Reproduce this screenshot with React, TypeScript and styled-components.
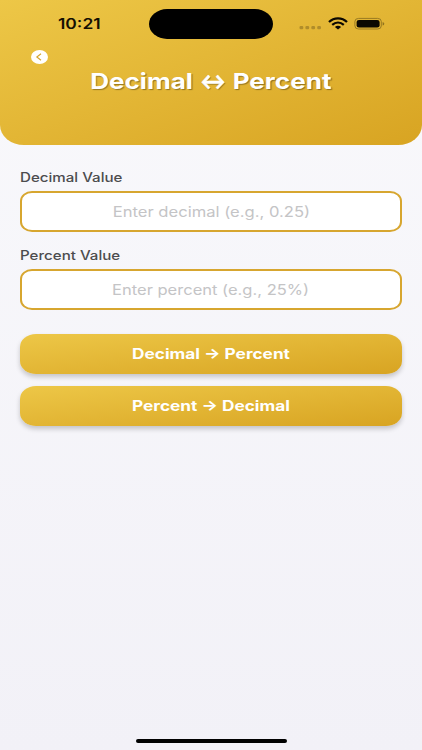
import React from 'react';
import styled, { createGlobalStyle } from 'styled-components';

const GlobalStyle = createGlobalStyle`
  * { box-sizing: border-box; }
  html, body { margin: 0; padding: 0; }
  body { font-family: Inter, "Liberation Sans", sans-serif; }
`;

const gold = 'linear-gradient(to bottom right, #edc747, #d8a422)';

const Screen = styled.main`
  display: flex;
  flex-direction: column;
  width: 422px;
  height: 750px;
  overflow: hidden;
  background: linear-gradient(#f9f9fc, #f2f1f7);
`;

const Header = styled.header`
  flex: none;
  height: 145px;
  background: ${gold};
  border-radius: 0 0 24px 24px / 0 0 20px 20px;
`;

const StatusBar = styled.div`
  display: grid;
  grid-template-columns: 149px 124px 1fr;
  align-items: center;
  height: 48px;
`;

/* Horizontally widened lettering */
const Wide = styled.span<{ $x: number; $origin?: string }>`
  display: inline-block;
  white-space: pre;
  transform: scaleX(${p => p.$x});
  transform-origin: ${p => p.$origin ?? 'center'};
`;

const Time = styled.div`
  padding-left: 57.5px;
  font-size: 14px;
  line-height: 18px;
  font-weight: 600;
  color: #151003;
`;

const Island = styled.div`
  height: 30px;
  border-radius: 18px / 15px;
  background: #000;
`;

const StatusIcons = styled.div`
  display: flex;
  align-items: center;
  padding-left: 26px;
`;

const BackButton = styled.button`
  display: flex;
  align-items: center;
  justify-content: center;
  width: 17px;
  height: 14px;
  margin: 1.5px 0 0 31px;
  padding: 0;
  border: 0;
  border-radius: 50%;
  background: #fff;

  svg { flex: none; }
`;

const Title = styled.h1`
  margin: 3.5px 0 0;
  text-align: center;
  font-size: 22px;
  line-height: 28px;
  font-weight: 700;
  color: #fff;
  text-shadow: 1px 1px 1px rgba(0, 0, 0, 0.35);
`;

const TitleArrow = styled.span`
  display: inline-block;
  margin: 0 -3.2px;
  transform: scaleX(0.75);
  -webkit-text-stroke: 0.5px #fff;
`;

const Form = styled.section`
  flex: 1;
  display: flex;
  flex-direction: column;
  padding: 24px 20px 0;
`;

const Field = styled.label`
  display: flex;
  flex-direction: column;
  height: 78px;
`;

const LabelText = styled.span`
  height: 22px;
  padding-top: 1px;
  line-height: 16px;
  font-size: 12.6px;
  font-weight: 500;
  color: #4c4c4e;
`;

const InputBox = styled.span`
  display: flex;
  align-items: center;
  justify-content: center;
  height: 40.5px;
  border: 2px solid #d7a62f;
  border-radius: 12px / 10px;
  background: #fff;
  font-size: 14.2px;
  color: #c4c4c6;
`;

const Actions = styled.div`
  display: flex;
  flex-direction: column;
  gap: 12px;
  padding-top: 9px;
`;

const Action = styled.button`
  display: flex;
  align-items: center;
  justify-content: center;
  height: 40px;
  padding: 0 0 2px;
  border: 0;
  border-radius: 16px / 13px;
  background: ${gold};
  box-shadow: 0 3px 5px rgba(0, 0, 0, 0.2);
  color: #fff;
  font-family: inherit;
  font-size: 14.2px;
  font-weight: 700;
`;

const HomeIndicator = styled.div`
  flex: none;
  align-self: center;
  width: 151px;
  height: 4px;
  margin-bottom: 7px;
  border-radius: 2px;
  background: #000;
`;

export default function App() {
  return (
    <Screen>
      <GlobalStyle />
      <Header>
        <StatusBar>
          <Time><Wide $x={1.245} $origin="left">10:21</Wide></Time>
          <Island />
          <StatusIcons>
            <svg width="88" height="18" viewBox="0 0 88 18">
              <g fill="#b08d2a">
                <rect x="0.5" y="11" width="3.8" height="3.2" rx="1.2" />
                <rect x="6.4" y="11" width="3.8" height="3.2" rx="1.2" />
                <rect x="12.3" y="11" width="3.8" height="3.2" rx="1.2" />
                <rect x="18.2" y="11" width="3.8" height="3.2" rx="1.2" />
              </g>
              <g fill="none" stroke="#0b0802" strokeWidth="2.2">
                <path d="M30 7C35 2.1 43 2.1 48 7" />
                <path d="M33.2 9.9C36.7 6.7 41.3 6.7 44.8 9.9" />
              </g>
              <path d="M35.9 12C37.8 10.4 40.2 10.4 42.1 12L39 14.4Z" fill="#0b0802" />
              <rect x="55.9" y="3.4" width="26.4" height="10.6" rx="3.7" ry="3.1" fill="none" stroke="#90731f" strokeWidth="0.9" />
              <rect x="57.6" y="5" width="23" height="7.4" rx="2.4" ry="2" fill="#0b0802" />
              <path d="M83.6 6.9q1.7.4 1.7 1.8t-1.7 1.8z" fill="#90731f" />
            </svg>
          </StatusIcons>
        </StatusBar>
        <BackButton aria-label="Back">
          <svg width="9" height="8" viewBox="0 0 9 8">
            <path d="M6 0.7L1.8 4L6 7.3" fill="none" stroke="#d6a52c" strokeWidth="1.1" />
          </svg>
        </BackButton>
        <Title>
          <Wide $x={1.185}>Decimal <TitleArrow>↔</TitleArrow> Percent</Wide>
        </Title>
      </Header>
      <Form>
        <Field>
          <LabelText><Wide $x={1.2} $origin="left">Decimal Value</Wide></LabelText>
          <InputBox><Wide $x={1.17}>Enter decimal (e.g., 0.25)</Wide></InputBox>
        </Field>
        <Field>
          <LabelText><Wide $x={1.2} $origin="left">Percent Value</Wide></LabelText>
          <InputBox><Wide $x={1.165}>Enter percent (e.g., 25%)</Wide></InputBox>
        </Field>
        <Actions>
          <Action><Wide $x={1.215}>Decimal → Percent</Wide></Action>
          <Action><Wide $x={1.215}>Percent → Decimal</Wide></Action>
        </Actions>
      </Form>
      <HomeIndicator />
    </Screen>
  );
}
